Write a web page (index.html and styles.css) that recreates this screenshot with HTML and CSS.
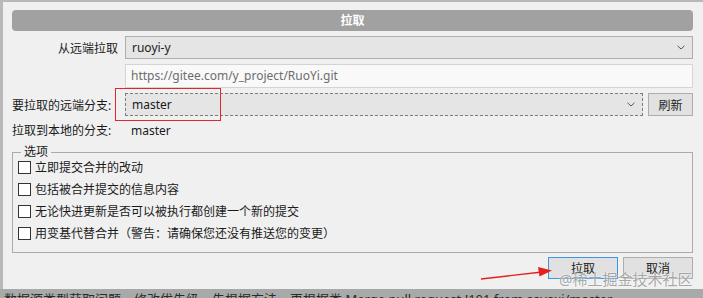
FILE: index.html
```html
<!DOCTYPE html>
<html lang="zh-CN">
<head>
  <meta charset="UTF-8" />
  <title>拉取</title>
  <link rel="stylesheet" href="styles.css">
</head>
<body>
  <div class="dialog">
    <div class="title-bar">拉取</div>

    <div class="form">
      <label class="label right">从远端拉取</label>
      <div class="combo">
        <span class="combo-text">ruoyi-y</span>
        <svg class="chevron" width="8" height="5" viewBox="0 0 8 5"><path d="M0.5 0.8 L4 4 L7.5 0.8" fill="none" stroke="#555" stroke-width="1"/></svg>
      </div>

      <span></span>
      <div class="text-input">https://gitee.com/y_project/RuoYi.git</div>

      <label class="label">要拉取的远端分支:</label>
      <div class="branch-row">
        <div class="combo focused">
          <span class="combo-text">master</span>
          <svg class="chevron" width="8" height="5" viewBox="0 0 8 5"><path d="M0.5 0.8 L4 4 L7.5 0.8" fill="none" stroke="#555" stroke-width="1"/></svg>
        </div>
        <button class="btn btn-refresh">刷新</button>
      </div>

      <label class="label">拉取到本地的分支:</label>
      <span class="value">master</span>
    </div>

    <fieldset class="options">
      <legend>选项</legend>
      <div class="option-list">
        <label class="option"><span class="check"></span>立即提交合并的改动</label>
        <label class="option"><span class="check"></span>包括被合并提交的信息内容</label>
        <label class="option"><span class="check"></span>无论快进更新是否可以被执行都创建一个新的提交</label>
        <label class="option"><span class="check"></span>用变基代替合并（警告：请确保您还没有推送您的变更）</label>
      </div>
    </fieldset>

    <div class="actions">
      <button class="btn btn-primary">拉取</button>
      <button class="btn">取消</button>
    </div>
  </div>

  <div class="log-line">数据源类型获取问题，修改优先级，先根据方法，再根据类 Merge pull request !101 from savaxi/master</div>

  <!-- annotations drawn over the screenshot -->
  <div class="mark-box"></div>
  <svg class="mark-arrow" width="80" height="20" viewBox="0 0 80 20">
    <path d="M1 17 L62 10" stroke="#e3211c" stroke-width="1.4" fill="none"/>
    <path d="M58 5 L72 8.6 L59.5 14.5 Z" fill="#e3211c"/>
  </svg>
  <div class="watermark">@稀土掘金技术社区</div>
</body>
</html>
```

FILE: styles.css
```css
body {
  margin: 0;
  width: 703px;
  height: 298px;
  overflow: hidden;
  position: relative;
  background-color: #b9b9b9;
  font-family: 'Noto Sans', 'Noto Sans CJK SC', sans-serif;
  font-size: 12px;
  color: #1a1a1a;
}

.dialog {
  margin: 2px 0 0 3px;
  height: 287px;
  background-color: #f0f0f0;
  display: flex;
  flex-direction: column;
  padding: 0 10px 0 9px;
  box-sizing: border-box;
}

.title-bar {
  margin-top: 8px;
  height: 21px;
  line-height: 21px;
  background-color: #a1a1a1;
  border-radius: 4px;
  color: white;
  font-weight: bold;
  text-align: center;
}

.form {
  margin-top: 5px;
  display: grid;
  grid-template-columns: 113px 1fr;
  grid-template-rows: 23px 24px 23px 18px;
  row-gap: 5px;
  align-items: center;
}

.label {
  white-space: nowrap;
}

.label.right {
  text-align: right;
  padding-right: 7px;
}

.combo {
  height: 23px;
  box-sizing: border-box;
  border: 1px solid #adadad;
  background-color: #e5e5e5;
  display: flex;
  align-items: center;
  padding: 0 7px 0 6px;
}

.combo.focused {
  flex: 1;
  border: 1px dashed #7d7d7d;
}

.combo-text {
  flex: 1;
}

.text-input {
  height: 24px;
  line-height: 22px;
  box-sizing: border-box;
  border: 1px solid #d4d4d4;
  background-color: #f9f9f9;
  color: #6d6d6d;
  padding-left: 5px;
}

.branch-row {
  display: flex;
  gap: 5px;
}

.value {
  padding-left: 6px;
}

.btn {
  width: 70px;
  height: 22px;
  box-sizing: border-box;
  border: 1px solid #adadad;
  background-color: #e1e1e1;
  font-family: inherit;
  font-size: 12px;
  color: #1a1a1a;
  padding: 0;
}

.btn-refresh {
  width: 45px;
  height: 23px;
}

.btn-primary {
  border-color: #3b95e3;
}

.options {
  margin: 7px 0 0;
  padding: 0 5px 8px;
  border: 1px solid #ababab;
  min-width: 0;
}

.options legend {
  margin-left: 3px;
  padding: 0 3px;
  line-height: 12px;
}

.option-list {
  margin-top: -2px;
  display: flex;
  flex-direction: column;
}

.option {
  height: 22px;
  display: flex;
  align-items: center;
  gap: 4px;
}

.check {
  width: 13px;
  height: 13px;
  box-sizing: border-box;
  border: 1px solid #333;
  background-color: #fff;
}

.actions {
  margin-top: 4px;
  display: flex;
  justify-content: flex-end;
  gap: 5px;
}

/* commit log behind the dialog, only its top half shows */
.log-line {
  height: 9px;
  overflow: hidden;
  padding-left: 4px;
  background-color: #a9a9a9;
  color: #2b2b2b;
  font-size: 13px;
  line-height: 20px;
  white-space: nowrap;
}

.mark-box {
  position: absolute;
  left: 115px;
  top: 88px;
  width: 106px;
  height: 33px;
  box-sizing: border-box;
  border: 1px solid #e3262b;
}

.mark-arrow {
  position: absolute;
  left: 480px;
  top: 262px;
}

.watermark {
  position: absolute;
  left: 559px;
  top: 268px;
  font-size: 15px;
  color: rgba(140, 140, 140, 0.75);
  text-shadow: 0 0 2px #fff;
  white-space: nowrap;
}
```
